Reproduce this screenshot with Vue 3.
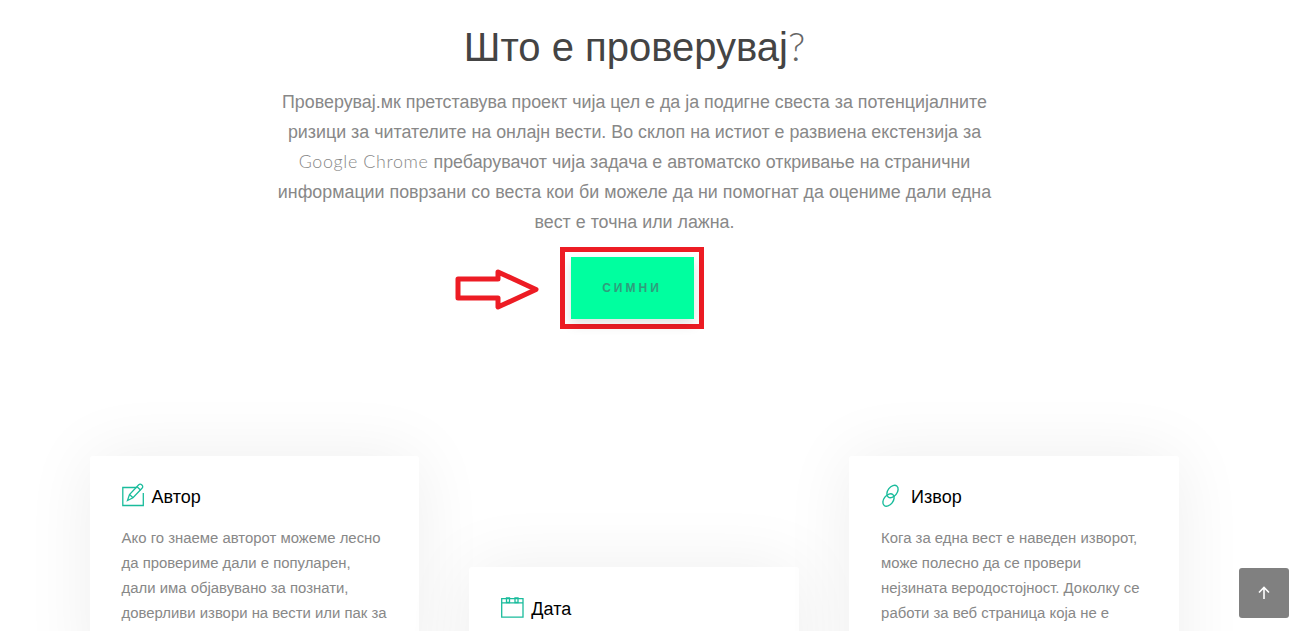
<script setup>
const cards = [
  {
    title: 'Автор',
    icon: 'pen',
    text: 'Ако го знаеме авторот можеме лесно\nда провериме дали е популарен,\nдали има објавувано за познати,\nдоверливи извори на вести или пак за\nсомнителни страници.',
  },
  {
    title: 'Дата',
    icon: 'cal',
    text: 'Датата на објавување ни кажува дали веста е актуелна или пак е стара вест која повторно се споделува.',
  },
  {
    title: 'Извор',
    icon: 'link',
    text: 'Кога за една вест е наведен изворот,\nможе полесно да се провери\nнејзината веродостојност. Доколку се\nработи за веб страница која не е\nпозната, треба да бидеме внимателни.',
  },
]
</script>

<template>
  <div class="page">
    <section class="intro">
      <h1>Што е проверувај<span class="mark">?</span></h1>
      <p class="lead">
        Проверувај.мк претставува проект чија цел е да ја подигне свеста за потенцијалните
        ризици за читателите на онлајн вести. Во склоп на истиот е развиена екстензија за
        <span class="brand">Google Chrome</span> пребарувачот чија задача е автоматско откривање на странични
        информации поврзани со веста кои би можеле да ни помогнат да оцениме дали една
        вест е точна или лажна.
      </p>
      <div class="download">
        <svg class="arrow" width="86" height="44" viewBox="0 0 86 44">
          <path d="M3 11H43V4L81 21.500 43 39V30H3Z" fill="#fff" stroke="#ed1c24" stroke-width="5" stroke-linejoin="round" />
        </svg>
        <a class="btn">СИМНИ</a>
      </div>
    </section>

    <section class="cards">
      <article v-for="card in cards" :key="card.title" class="card">
        <h3>
          <svg v-if="card.icon === 'pen'" class="icon" width="24" height="24" viewBox="0 0 24 24" fill="none" stroke="#1abc9c" stroke-width="1.3">
            <path d="M14.500 4.500H.8V22.500H21.300V10" />
            <path d="M5.500 17.500 7.500 11.500 16.500 2c1-1 2.300-1 3.400 0s1.100 2.300.1 3.300L11 14.800Z" />
            <path d="M7.500 11.500 11 14.800M15 3.700 18.500 7" />
          </svg>
          <svg v-else-if="card.icon === 'cal'" class="icon" width="24" height="24" viewBox="0 0 24 24" fill="none" stroke="#1abc9c" stroke-width="1.3">
            <path d="M.7 3.700H22V22.200H.7ZM.7 7.800H22" />
            <path d="M5.500 3H8.500V7.500H5.500ZM14 3H17V7.500H14Z" />
          </svg>
          <svg v-else class="icon" width="24" height="24" viewBox="0 0 24 24" fill="none" stroke="#1abc9c" stroke-width="1.4">
            <ellipse cx="11.500" cy="8.500" rx="4.600" ry="7" transform="rotate(38 11.500 8.500)" />
            <ellipse cx="7.500" cy="17" rx="4.600" ry="7" transform="rotate(38 7.500 17)" />
          </svg>
          {{ card.title }}
        </h3>
        <p>{{ card.text }}</p>
      </article>
    </section>

    <a class="to-top">
      <svg width="14" height="14" viewBox="0 0 14 14" fill="none" stroke="#fff" stroke-width="1.600">
        <path d="M7 13V1.500M2 6.500 7 1.500 12 6.500" />
      </svg>
    </a>
  </div>
</template>

<style scoped>
.page {
  width: 1269px;
  font-family: "Liberation Sans", Arial, sans-serif;
}
.intro {
  display: flex;
  flex-direction: column;
  align-items: center;
}
h1 {
  margin: 19px 0 0;
  font-size: 40px;
  line-height: 54px;
  font-weight: 400;
  color: #444;
}
.mark {
  font-family: Lato, sans-serif;
  font-weight: 300;
  color: #666;
}
.lead {
  width: 730px;
  margin: 13px 0 0;
  font-size: 17.850px;
  line-height: 30px;
  color: #888;
  text-align: center;
}
.brand {
  font-family: Lato, sans-serif;
  font-weight: 300;
  letter-spacing: 0.65px;
  line-height: 0;
}
.download {
  position: relative;
  margin: 10px 6px 0 0;
  padding: 5px 5px 5px 6px;
  border: 5px solid #ed1c24;
}
.arrow {
  position: absolute;
  left: -110px;
  top: 16px;
}
.btn {
  display: block;
  width: 123px;
  height: 62px;
  background: #00ff9f;
  color: #2f9d7c;
  font-size: 12px;
  font-weight: 700;
  line-height: 62px;
  letter-spacing: 3px;
  text-align: center;
  box-shadow: 0 5px 12px rgba(0, 0, 0, 0.12);
}
.cards {
  display: grid;
  grid-template-columns: repeat(3, 329.500px);
  justify-content: space-between;
  align-items: start;
  width: 1089px;
  margin: 127px 0 0 89.600px;
}
.card {
  padding: 29px 32px 30px;
  background: #fff;
  border-radius: 3px;
  box-shadow: 0 0 70px rgba(0, 0, 0, 0.07);
}
.card:nth-child(2) {
  margin-top: 111px;
}
.card:nth-child(2) h3 {
  margin-top: 1px;
}
h3 {
  display: flex;
  align-items: center;
  gap: 6px;
  margin: 0;
  font-size: 18px;
  line-height: 24px;
  font-weight: 400;
  color: #000;
}
.icon {
  flex: none;
  margin-top: -4px;
  overflow: visible;
}
.card p {
  margin: 17px 0 0;
  font-size: 14.900px;
  line-height: 25px;
  color: #888;
  white-space: pre-line;
}
.to-top {
  position: fixed;
  right: 3px;
  bottom: 13px;
  display: flex;
  align-items: center;
  justify-content: center;
  width: 50px;
  height: 50px;
  background: #808080;
  border-radius: 3px;
}
</style>

<style>
html,
body {
  overflow: hidden;
  background: #fff;
}
</style>
